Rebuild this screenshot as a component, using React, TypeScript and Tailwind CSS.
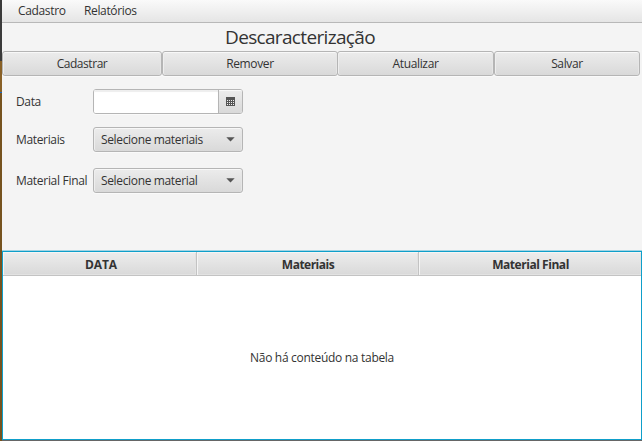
import React from "react";

const raised =
  "border border-[#b5b5b5] rounded-[3px] bg-linear-to-b from-[#ececec] to-[#d9d9d9] shadow-[inset_0_1px_0_#f8f8f8,inset_1px_0_0_#eeeeee,inset_-1px_0_0_#e6e6e6,0_1px_0_#fafafa]";

function ActionButton({ label, className }: { label: string; className: string }) {
  return (
    <button className={`${raised} ${className} flex h-[25px] shrink-0 items-center justify-center`}>
      {label}
    </button>
  );
}

function Combo({ label }: { label: string }) {
  return (
    <button className={`${raised} flex h-[25px] w-[150px] items-center justify-between pl-[7px] pr-[7px]`}>
      <span>{label}</span>
      <svg width="9" height="5" viewBox="0 0 9 5" className="shrink-0">
        <path d="M0.3 0.3H8.7L4.5 4.6Z" fill="#555" />
      </svg>
    </button>
  );
}

function CalendarIcon() {
  return (
    <svg width="9" height="9" viewBox="0 0 9 9" shapeRendering="crispEdges">
      <path d="M0 0H9V9H0Z" fill="#555" />
      {[3, 5, 7].map((y) =>
        [1, 3, 5, 7].map((x) => <rect key={`${x}-${y}`} x={x} y={y} width="1" height="1" fill="#eee" />)
      )}
    </svg>
  );
}

function HeaderCell({ label, className }: { label: string; className: string }) {
  return (
    <div
      className={`${className} flex h-6 shrink-0 items-center justify-center border-b border-[#c3c3c3] bg-linear-to-b from-[#ededed] to-[#d9d9d9] pt-[2px] font-bold shadow-[inset_1px_1px_0_#f5f5f5,inset_-1px_-1px_0_#e2e2e2]`}
    >
      {label}
    </div>
  );
}

export default function App() {
  return (
    <div className="flex h-[441px] w-[642px] overflow-hidden whitespace-nowrap bg-[#f4f4f4] font-['Open_Sans','Noto_Sans',sans-serif] text-[12px] leading-4 tracking-[-0.35px] text-[#333]">
      <div className="flex w-[2px] shrink-0 flex-col">
        <div className="h-[61px] bg-[#3b3b3b]" />
        <div className="h-[31px] bg-[#896127]" />
        <div className="h-px bg-[#1668c8]" />
        <div className="flex-1 bg-[#76531f]" />
      </div>
      <div className="flex w-[640px] shrink-0 flex-col">
        <nav className="flex h-[23px] shrink-0 items-start border-b border-[#b8b8b8] bg-linear-to-b from-[#fafafa] to-[#e5e5e5] pl-4 pt-[3px]">
          <span className="w-[66px]">Cadastro</span>
          <span>Relatórios</span>
        </nav>
        <h1 className="flex h-7 shrink-0 items-center pl-[223px] text-[19px] leading-7 tracking-[-0.66px]">
          Descaracterização
        </h1>
        <div className="flex shrink-0">
          <ActionButton label="Cadastrar" className="w-[160px] tracking-[-0.45px]" />
          <ActionButton label="Remover" className="w-[176px]" />
          <ActionButton label="Atualizar" className="-ml-px w-[157px]" />
          <ActionButton label="Salvar" className="w-[146px]" />
        </div>
        <div className="grid h-[174px] shrink-0 grid-cols-[77px_150px] grid-rows-[38px_41px_25px] pl-[14px] pt-[13px]">
          <label className="pt-[5px]">Data</label>
          <div className="flex h-[25px] overflow-hidden rounded-[3px] border border-[#b5b5b5] bg-white shadow-[0_1px_0_#fafafa]">
            <input className="w-[124px] bg-white shadow-[inset_0_2px_1px_#eeeeee] outline-none" />
            <button className="flex w-6 shrink-0 items-center justify-center border-l border-[#b5b5b5] bg-linear-to-b from-[#ececec] to-[#d9d9d9] shadow-[inset_0_1px_0_#f8f8f8]">
              <CalendarIcon />
            </button>
          </div>
          <label className="pt-[5px]">Materiais</label>
          <Combo label="Selecione materiais" />
          <label className="pt-[5px] tracking-[-0.3px]">Material Final</label>
          <Combo label="Selecione material" />
        </div>
        <div className="h-px shrink-0 bg-[#a3d4e3]" />
        <section className="flex h-[189px] shrink-0 flex-col border border-[#0f9fca] bg-white">
          <div className="flex shrink-0">
            <HeaderCell label="DATA" className="w-[194px] border-r pl-[3px] tracking-[-0.1px]" />
            <HeaderCell label="Materiais" className="w-[222px] border-r pl-px tracking-[-0.5px]" />
            <HeaderCell label="Material Final" className="w-[222px] pl-px tracking-[-0.45px]" />
          </div>
          <div className="flex flex-1 items-center justify-center pt-px tracking-[-0.3px]">
            Não há conteúdo na tabela
          </div>
        </section>
        <div className="h-px shrink-0 bg-[#666]" />
      </div>
    </div>
  );
}
